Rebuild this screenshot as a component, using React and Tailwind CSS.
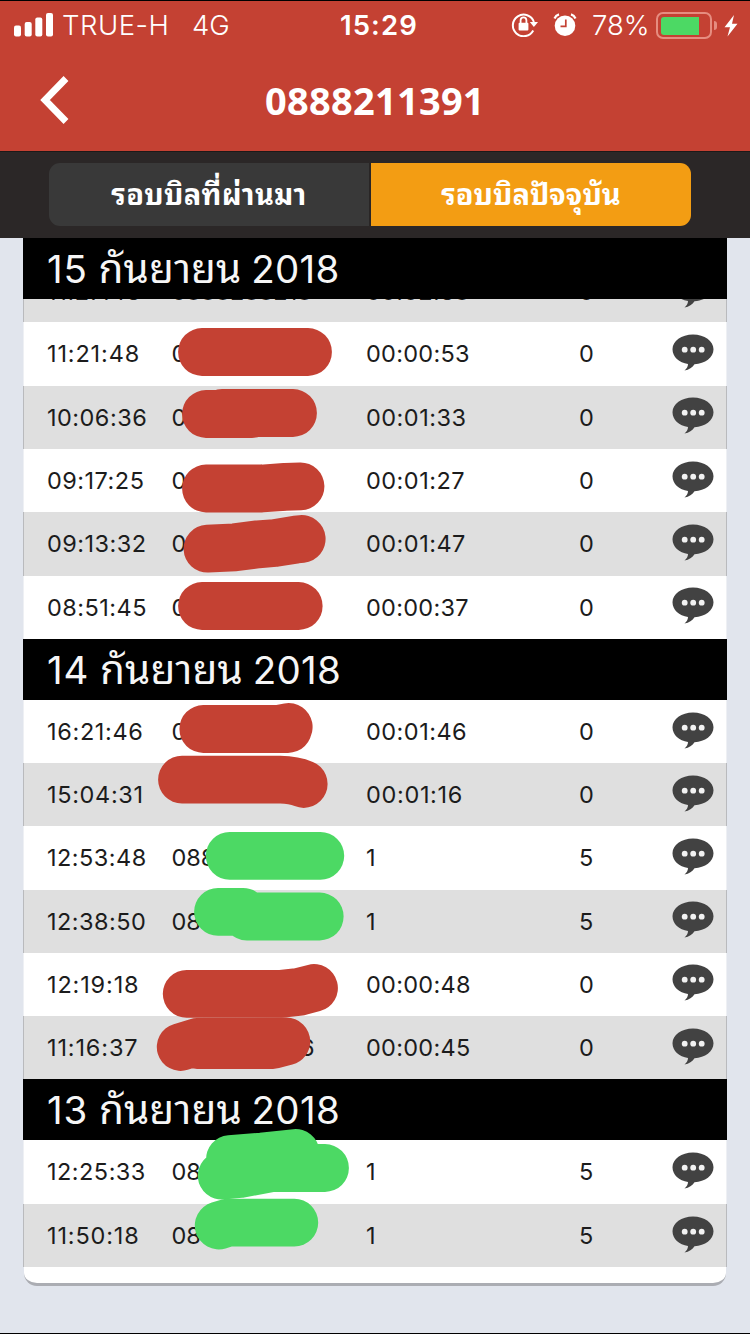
const sections = [
  {
    day: '15',
    month: 'กันยายน',
    year: '2018',
    bodyClass: 'h-[316.67px]',
    rows: [
      { time: '11:21:48', number: '0', usage: '00:00:53', cost: '0' },
      { time: '10:06:36', number: '0', usage: '00:01:33', cost: '0', shaded: true },
      { time: '09:17:25', number: '0', usage: '00:01:27', cost: '0' },
      { time: '09:13:32', number: '0', usage: '00:01:47', cost: '0', shaded: true },
      { time: '08:51:45', number: '0', usage: '00:00:37', cost: '0' },
    ],
  },
  {
    day: '14',
    month: 'กันยายน',
    year: '2018',
    bodyClass: 'h-[379.2px]',
    rows: [
      { time: '16:21:46', number: '0', usage: '00:01:46', cost: '0' },
      { time: '15:04:31', number: '', usage: '00:01:16', cost: '0', shaded: true },
      { time: '12:53:48', number: '088', usage: '1', cost: '5' },
      { time: '12:38:50', number: '08', usage: '1', cost: '5', shaded: true },
      { time: '12:19:18', number: '', usage: '00:00:48', cost: '0' },
      { time: '11:16:37', number: '6', numberEnd: true, usage: '00:00:45', cost: '0', shaded: true },
    ],
  },
  {
    day: '13',
    month: 'กันยายน',
    year: '2018',
    bodyClass: 'h-[127px]',
    rows: [
      { time: '12:25:33', number: '08', usage: '1', cost: '5' },
      { time: '11:50:18', number: '08', usage: '1', cost: '5', shaded: true },
    ],
  },
];

// Row that is half hidden under the sticky date header
const clippedRow = { time: '11:27:43', number: '0888288218', usage: '00:02:38', cost: '0', shaded: true };

// Marker strokes drawn over the phone numbers
const redMarks = [
  'M202 352H308',
  'M206 414H252M222 413H293',
  'M206 488.5H262L285 486.8L300.5 486.4',
  'M207.5 548.7L235 547.3L258 544.3L275 543L296 539.6L301.7 539',
  'M202 606H298.7',
  'M203.3 729H288M278 729L288.7 727',
  'M182 779.7H280Q294 780 303.7 784',
  'M186.7 993.8H282L300 991.7L314 988',
  'M180.7 1047L197 1042L286.3 1041.5L273 1045H197',
];

const greenMarks = [
  'M229.7 855.8H320.3',
  'M218 911.8H243L247 916.5H319.7',
  'M325 1168H272L240 1174L221.7 1175.7M230 1159L262 1156.5L295.7 1153M230 1166H300',
  'M218.7 1225.5L228 1222.7H294.3',
];

// The glyph for 1 is narrow, so strings with many of them are opened up a little
const digitSpacing = (text) => {
  if (text.length < 8) return 0.3;
  const ones = text.split('1').length - 1;
  return 0.28 + ones * 0.19;
};

const ChatIcon = () => (
  <svg className="mb-[2px] h-[38px] w-[42px]" viewBox="0 0 42 38">
    <path
      d="M21 0.5C32.5 0.5 41.5 7 41.5 15.2C41.5 23.5 33 29.6 22.5 30.2C20.5 33.5 17 35.8 12.5 36.5C14.8 34.6 16 32.4 16 29.9C7 28.8 0.5 22.8 0.5 15.2C0.5 7 9.5 0.5 21 0.5Z"
      fill="#424242"
    />
    <circle cx="12.7" cy="15.7" r="2.9" fill="#f2f2f2" />
    <circle cx="21.2" cy="15.7" r="2.9" fill="#f2f2f2" />
    <circle cx="29.7" cy="15.7" r="2.9" fill="#f2f2f2" />
  </svg>
);

const CallRow = ({ row }) => (
  <div
    className={`flex min-h-0 items-center pt-[0.2px] pl-[23px] text-[23.5px] text-[#1c1c1c] ${
      row.shaded ? 'border-x border-[#b9babd] bg-[#dfdfdf]' : 'border-x border-[#eef0f4] bg-white'
    }`}
  >
    <span className="w-[124.5px] shrink-0" style={{ letterSpacing: digitSpacing(row.time) }}>
      {row.time}
    </span>
    <span className={`w-[194.5px] shrink-0 ${row.numberEnd ? 'pl-[128.5px]' : ''}`}>{row.number}</span>
    <span className="w-[213px] shrink-0" style={{ letterSpacing: digitSpacing(row.usage) }}>
      {row.usage}
    </span>
    <span className="w-[93px] shrink-0">{row.cost}</span>
    <ChatIcon />
  </div>
);

const DateHeader = ({ day, month, year }) => (
  <div className="h-[61px] bg-black pl-[24px] text-[38.5px] leading-[61px] whitespace-nowrap text-[#f6f6f6]">
    <span className="tracking-[0.8px]">{day}</span> <span className="text-[40.5px] tracking-[0.1px]">{month}</span>{' '}
    <span className="-ml-px tracking-[0.3px]">{year}</span>
  </div>
);

const StatusBar = () => (
  <div className="flex h-[50px] items-center border-t border-black text-[27.5px] text-white">
    <svg className="mb-[2px] ml-[14px] h-[24px] w-[39px] shrink-0" viewBox="0 0 39 24">
      <rect x="0" y="12.5" width="7" height="11" rx="2" fill="white" />
      <rect x="10.7" y="9" width="7" height="14.5" rx="2" fill="white" />
      <rect x="21.3" y="4.5" width="7" height="19" rx="2" fill="white" />
      <rect x="32" y="0" width="7" height="23.5" rx="2" fill="white" />
    </svg>
    <span className="ml-[9px] w-[130px] shrink-0 font-light tracking-[0.5px]">TRUE-H</span>
    <span className="w-[148px] shrink-0 font-light">4G</span>
    <span className="w-[171px] shrink-0 font-semibold tracking-[1.1px]">15:29</span>
    <svg className="mb-[3px] h-[26px] w-[28px] shrink-0" viewBox="0 0 28 26" fill="none">
      <path d="M22.2 19.5A10.8 10.8 0 1 1 22.9 11" stroke="white" strokeWidth="2" />
      <path d="M18.8 11H27L22.9 16Z" fill="white" />
      <rect x="7.6" y="11.8" width="9.8" height="7.7" rx="1" fill="white" />
      <path d="M9.6 12V9.2a2.9 2.9 0 0 1 5.8 0V12" stroke="white" strokeWidth="1.8" />
    </svg>
    <svg className="mb-[2px] ml-[14px] h-[24px] w-[24px] shrink-0" viewBox="0 0 24 24" fill="none">
      <circle cx="12" cy="12.7" r="10.3" fill="white" />
      <path d="M1.5 5.5A7 7 0 0 1 6 1.4M22.5 5.5A7 7 0 0 0 18 1.4" stroke="white" strokeWidth="2.2" />
      <path d="M12.8 6.5V13.3H7.5" stroke="#c44133" strokeWidth="1.7" />
    </svg>
    <span className="ml-[15px] w-[64px] shrink-0 font-light">78%</span>
    <div className="flex h-[27px] w-[56px] shrink-0 rounded-[7px] border-2 border-[#e68d80] p-[2.5px]">
      <div className="h-full w-[38px] rounded-l-[3px] bg-[#4cd964]" />
    </div>
    <div className="ml-[2px] h-[9px] w-[3px] shrink-0 rounded-r-full bg-[#e68d80]" />
    <svg className="ml-[7px] h-[24px] w-[14px] shrink-0" viewBox="0 0 14 24">
      <path d="M10 1L0.5 13.3H6L3.5 22.5L13.5 9.8H8Z" fill="white" />
    </svg>
  </div>
);

export default function App() {
  return (
    <div className="relative flex h-[1334px] w-[750px] flex-col overflow-hidden border-b border-black bg-[#e1e5ed] font-['Inter','Noto_Sans_Thai_Looped','Loma','Waree','Noto_Sans_Thai','Noto_Sans',sans-serif]">
      <header className="h-[151px] shrink-0 bg-[#c44133]">
        <StatusBar />
        <div className="grid h-[99px] grid-cols-[265px_1fr] items-center">
          <svg className="ml-[40px] h-[48px] w-[30px]" viewBox="0 0 30 48" fill="none">
            <path d="M26 2.5L5 24L26 45.5" stroke="white" strokeWidth="6.8" />
          </svg>
          <h1 className="pt-px font-['Noto_Sans','Open_Sans',sans-serif] text-[38px] leading-none font-bold tracking-[0.25px] text-white">
            0888211391
          </h1>
        </div>
      </header>

      <nav className="h-[87px] shrink-0 border-t border-[#1d1918] bg-[#2b2727] px-[49px] pt-[11px]">
        <div className="flex h-[63px] w-[642px] overflow-hidden rounded-[11px] text-[29px] font-bold text-white">
          <button className="flex w-[322px] items-center justify-center border-r-2 border-[#292626] bg-[#393939] pt-px tracking-[0.3px]">
            รอบบิลที่ผ่านมา
          </button>
          <button className="flex w-[320px] items-center justify-center bg-[#f39d13] pt-px">รอบบิลปัจจุบัน</button>
        </div>
      </nav>

      <main className="ml-[23px] w-[704px] shrink-0">
        {sections.map((section, index) => (
          <section key={section.day}>
            <DateHeader day={section.day} month={section.month} year={section.year} />
            {index === 0 && (
              <div className="flex h-[23.33px] flex-col justify-end overflow-hidden">
                <div className="grid h-[62.2px] shrink-0">
                  <CallRow row={clippedRow} />
                </div>
              </div>
            )}
            <div className={`grid auto-rows-fr ${section.bodyClass}`}>
              {section.rows.map((row) => (
                <CallRow key={row.time} row={row} />
              ))}
            </div>
          </section>
        ))}
        <div className="mx-px h-[19px] rounded-b-[13px] border-b-[3px] border-[#abadb3] bg-white" />
      </main>

      <svg
        className="pointer-events-none absolute top-0 left-0 h-[1334px] w-[750px]"
        viewBox="0 0 750 1334"
        fill="none"
        strokeWidth="47.8"
        strokeLinecap="round"
        strokeLinejoin="round"
      >
        {redMarks.map((d) => (
          <path key={d} d={d} stroke="#c44133" />
        ))}
        {greenMarks.map((d) => (
          <path key={d} d={d} stroke="#4cd964" />
        ))}
      </svg>
    </div>
  );
}
